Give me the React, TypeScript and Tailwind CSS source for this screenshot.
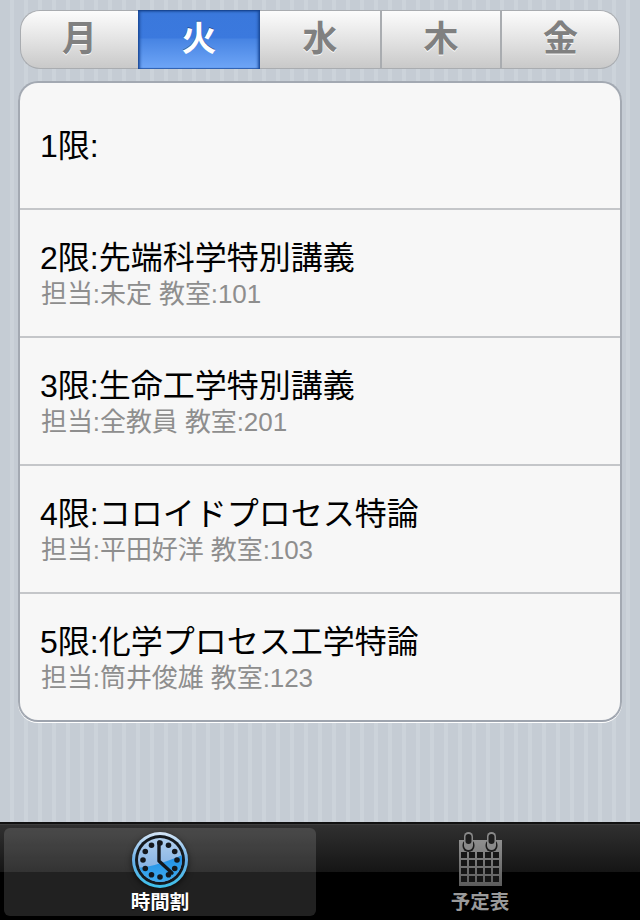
const FONT = "font-['Liberation_Sans','Noto_Sans_CJK_JP',sans-serif]";

const days = [
  { label: "月", cls: "w-[118px] rounded-l-[20px] border-l" },
  { label: "火", cls: "w-[122px]", active: true },
  { label: "水", cls: "w-[122px] border-r-2" },
  { label: "木", cls: "w-[120px] border-r-2" },
  { label: "金", cls: "w-[118px] rounded-r-[20px] border-r" },
];

const rows = [
  { title: "1限:", sub: "" },
  { title: "2限:先端科学特別講義", sub: "担当:未定 教室:101" },
  { title: "3限:生命工学特別講義", sub: "担当:全教員 教室:201" },
  { title: "4限:コロイドプロセス特論", sub: "担当:平田好洋 教室:103" },
  { title: "5限:化学プロセス工学特論", sub: "担当:筒井俊雄 教室:123" },
];

function ClockIcon() {
  const dots = Array.from({ length: 12 }, (_, i) => {
    const a = (i * Math.PI) / 6;
    return { x: 28 + 17 * Math.sin(a), y: 28 - 17 * Math.cos(a) };
  });
  return (
    <svg width="56" height="56" viewBox="0 0 56 56" className="drop-shadow-[0_2px_3px_rgba(0,0,0,0.6)]">
      <defs>
        <linearGradient id="rim" x1="0" y1="0" x2="0" y2="1">
          <stop offset="0" stopColor="#d6e6f6" />
          <stop offset="0.5" stopColor="#6cb0e8" />
          <stop offset="1" stopColor="#3cc0ea" />
        </linearGradient>
        <linearGradient id="face" x1="0" y1="0" x2="0" y2="1">
          <stop offset="0" stopColor="#b0cfee" />
          <stop offset="0.6" stopColor="#8ab6e6" />
          <stop offset="1" stopColor="#8ab6e6" />
        </linearGradient>
        <linearGradient id="low" x1="0" y1="0" x2="0" y2="1">
          <stop offset="0" stopColor="#1b8ce6" />
          <stop offset="1" stopColor="#45b0f0" />
        </linearGradient>
        <clipPath id="faceClip">
          <circle cx="28" cy="28" r="22" />
        </clipPath>
      </defs>
      <circle cx="28" cy="28" r="28" fill="url(#rim)" />
      <circle cx="28" cy="28" r="25" fill="#14191e" />
      <circle cx="28" cy="28" r="22" fill="url(#face)" />
      <path d="M3 36 C20 35 38 29 54 21 L54 54 L3 54 Z" fill="url(#low)" clipPath="url(#faceClip)" />
      {dots.map((d, i) => (
        <circle key={i} cx={d.x} cy={d.y} r="2.8" fill="#14181d" />
      ))}
      <path d="M27 10 L27 29 L40 41" fill="none" stroke="#14181d" strokeWidth="3.4" strokeLinecap="round" strokeLinejoin="round" />
    </svg>
  );
}

function CalendarIcon() {
  const cells = [];
  for (let r = 0; r < 4; r++) {
    for (let c = 0; c < 5; c++) {
      cells.push(<rect key={`${r}-${c}`} x={2 + c * 8} y={20 + r * 8} width="6" height="6" fill="#161616" />);
    }
  }
  return (
    <svg width="43" height="54" viewBox="0 0 43 54">
      <defs>
        <linearGradient id="cal" x1="0" y1="0" x2="0" y2="1">
          <stop offset="0" stopColor="#8f8f8f" />
          <stop offset="1" stopColor="#5c5c5c" />
        </linearGradient>
      </defs>
      <path d="M0 8 H43 V54 H0 Z" fill="url(#cal)" />
      <rect x="3.5" y="7" width="12" height="13" rx="6" fill="#1c1c1c" />
      <rect x="26.5" y="7" width="12" height="13" rx="6" fill="#1c1c1c" />
      <rect x="5" y="0" width="9" height="18" rx="4.5" fill="#8a8a8a" />
      <rect x="28" y="0" width="9" height="18" rx="4.5" fill="#8a8a8a" />
      <rect x="6.5" y="2" width="6" height="10" rx="3" fill="#1e1e1e" />
      <rect x="29.5" y="2" width="6" height="10" rx="3" fill="#1e1e1e" />
      {cells}
    </svg>
  );
}

export default function App() {
  return (
    <div
      className={`${FONT} flex h-[920px] w-[640px] flex-col overflow-hidden bg-[repeating-linear-gradient(90deg,#c5ccd4_0px,#c5ccd4_10px,#ccd3da_10px,#ccd3da_14px)]`}
    >
      <div className="flex-1 px-[18px] pt-[10px]">
        <div className="mx-[2px] flex h-[59px]">
          {days.map((d) =>
            d.active ? (
              <div
                key={d.label}
                className={`${d.cls} flex items-center justify-center bg-[linear-gradient(180deg,#2f66bd_0px,#3a78dc_4px,#3b79de_28px,#4784e3_29px,#6fa6f7_100%)] text-[35px] font-bold text-white shadow-[inset_0_1px_2px_#123f8a,inset_3px_0_3px_-1px_#1f4f9f,inset_-3px_0_3px_-1px_#1f4f9f,inset_0_-1px_0_#3d6fc0] [text-shadow:0_-1px_0_rgba(0,0,0,0.35)]`}
              >
                {d.label}
              </div>
            ) : (
              <div
                key={d.label}
                className={`${d.cls} flex items-center justify-center border-y border-[#a9acb0] bg-[linear-gradient(180deg,#fcfcfc_0%,#e6e6e6_45%,#c9c9c9_100%)] text-[35px] font-bold text-[#808080] [text-shadow:0_1px_0_#fff]`}
              >
                {d.label}
              </div>
            ),
          )}
        </div>

        <div className="mt-[12px] flex flex-col overflow-hidden rounded-[20px] border-2 border-[#a3a9b2] border-b-[#9ea4ae] bg-[#f7f7f7] shadow-[0_1px_0_#fff]">
          {rows.map((r, i) =>
            i === 0 ? (
              <div key={r.title} className="flex h-[125px] items-center pl-[20px]">
                <div className="text-[32px] leading-[38px] text-black">{r.title}</div>
              </div>
            ) : (
              <div key={r.title} className="flex h-[128px] flex-col border-t-2 border-[#c4c6c9] pt-[29px] pl-[20px]">
                <div className="text-[32px] leading-[38px] text-black">{r.title}</div>
                <div className="pl-[1px] text-[26px] leading-[34px] tracking-[-0.08px] text-[#8e8e8e]">{r.sub}</div>
              </div>
            ),
          )}
        </div>
      </div>

      <div className="grid h-[98px] grid-cols-2 border-t-2 border-[#111] bg-[linear-gradient(180deg,#4a4a4a_0px,#303030_1px,#151515_48px,#000_48px,#000_100%)] px-[4px] pt-[4px] pb-[4px]">
        <div className="mr-[4px] flex flex-col items-center rounded-[6px] bg-white/[0.13] pt-[4px]">
          <ClockIcon />
          <span className="mt-[2px] text-[19.5px] leading-[24px] font-bold text-white [text-shadow:0_1px_1px_rgba(0,0,0,0.8)]">時間割</span>
        </div>
        <div className="flex flex-col items-center pt-[4px] pl-[4px]">
          <CalendarIcon />
          <span className="mt-[4px] text-[19.5px] leading-[24px] font-bold text-[#9a9a9a]">予定表</span>
        </div>
      </div>
    </div>
  );
}
